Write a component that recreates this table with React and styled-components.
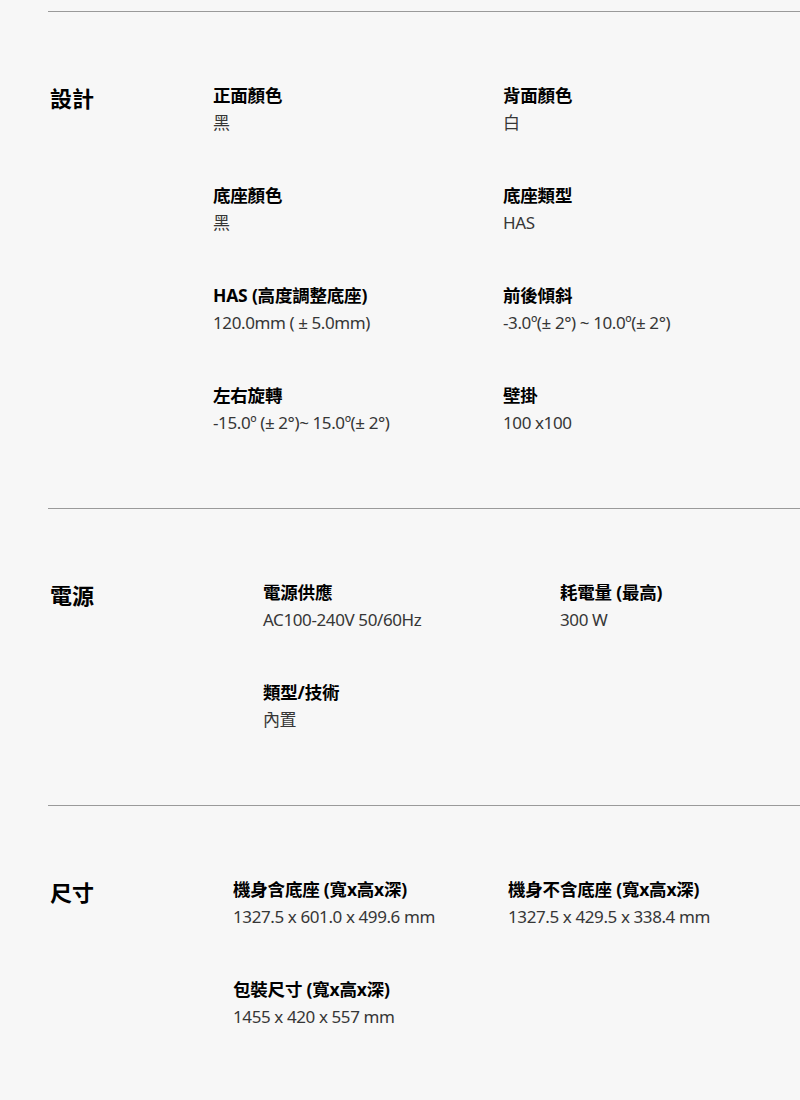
import React from "react";
import styled, { createGlobalStyle } from "styled-components";

const GlobalStyle = createGlobalStyle`
  body {
    margin: 0;
    background: #f7f7f7;
    font-family: "Noto Sans", "Noto Sans CJK TC", sans-serif;
    color: #000;
  }
`;

const Page = styled.div`
  padding: 11px 0 0 48px;
  min-height: 1089px;
  background: #f7f7f7;
`;

const Section = styled.section`
  display: grid;
  grid-template-columns: ${(p) => p.$lead}px ${(p) => p.$col}px 1fr;
  border-top: 1px solid #9a9a9a;
  padding: 69px 0 71px 0;
`;

const Title = styled.h2`
  margin: -1px 0 0 0;
  padding-left: 2px;
  font-size: 22px;
  line-height: 36px;
  font-weight: 700;
  color: #000;
`;

const Items = styled.div`
  grid-column: 2 / 4;
  display: grid;
  grid-template-columns: ${(p) => p.$col}px 1fr;
  row-gap: 44px;
`;

const Item = styled.div`
  display: flex;
  flex-direction: column;
`;

const Label = styled.div`
  font-size: 17.5px;
  line-height: 28px;
  font-weight: 700;
  color: #000;
  letter-spacing: -0.2px;
`;

const Value = styled.div`
  font-size: 17px;
  line-height: 28px;
  font-weight: 400;
  color: #363636;
  letter-spacing: -0.4px;
`;

const sections = [
  {
    title: "設計",
    lead: 165,
    col: 290,
    items: [
      ["正面顏色", "黑"],
      ["背面顏色", "白"],
      ["底座顏色", "黑"],
      ["底座類型", "HAS"],
      ["HAS (高度調整底座)", "120.0mm ( ± 5.0mm)"],
      ["前後傾斜", "-3.0º(± 2°) ~ 10.0º(± 2°)"],
      ["左右旋轉", "-15.0º (± 2°)~ 15.0º(± 2°)"],
      ["壁掛", "100 x100"],
    ],
  },
  {
    title: "電源",
    lead: 215,
    col: 297,
    items: [
      ["電源供應", "AC100-240V 50/60Hz"],
      ["耗電量 (最高)", "300 W"],
      ["類型/技術", "內置"],
    ],
  },
  {
    title: "尺寸",
    lead: 185,
    col: 275,
    items: [
      ["機身含底座 (寬x高x深)", "1327.5 x 601.0 x 499.6 mm"],
      ["機身不含底座 (寬x高x深)", "1327.5 x 429.5 x 338.4 mm"],
      ["包裝尺寸 (寬x高x深)", "1455 x 420 x 557 mm"],
    ],
  },
];

const App = () => {
  return (
    <Page>
      <GlobalStyle />
      {sections.map((s) => (
        <Section key={s.title} $lead={s.lead} $col={s.col}>
          <Title>{s.title}</Title>
          <Items $col={s.col}>
            {s.items.map(([label, value]) => (
              <Item key={label}>
                <Label>{label}</Label>
                <Value>{value}</Value>
              </Item>
            ))}
          </Items>
        </Section>
      ))}
    </Page>
  );
};

export default App;
